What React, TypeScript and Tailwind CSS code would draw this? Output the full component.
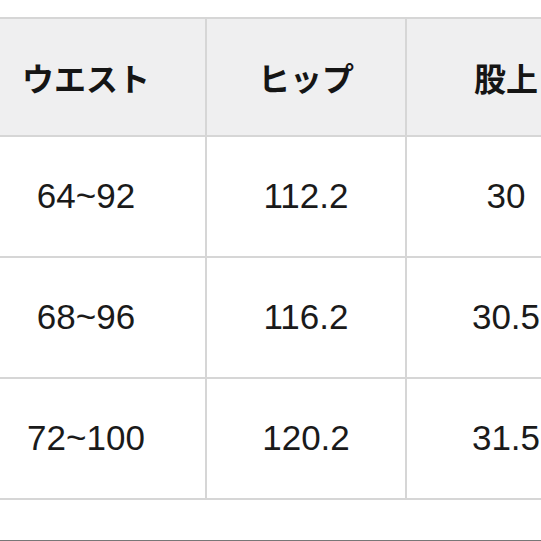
const headers = ['ウエスト', 'ヒップ', '股上'];
const rows = [
  ['64~92', '112.2', '30'],
  ['68~96', '116.2', '30.5'],
  ['72~100', '120.2', '31.5'],
];

export default function App() {
  return (
    <div className="h-[541px] w-[541px] overflow-hidden bg-white border-b border-[#777] pt-[17px]">
      <div
        className="ml-[-33px] grid grid-cols-[240px_200px_200px] border-t-2 border-[#d6d6d6] text-[#1c1c1c]"
        style={{ fontFamily: '"Liberation Sans", "Noto Sans CJK JP", sans-serif' }}
      >
        {headers.map((h) => (
          <div
            key={h}
            className="h-[118px] flex items-center justify-center bg-[#efeff0] border-r-2 border-b-2 border-[#d6d6d6] text-[32px] font-bold text-[#151515]"
            style={{ fontFamily: '"Noto Sans CJK JP", sans-serif' }}
          >
            {h}
          </div>
        ))}
        {rows.map((r, i) =>
          r.map((c, j) => (
            <div
              key={`${i}-${j}`}
              className="h-[121px] flex items-center justify-center border-r-2 border-b-2 border-[#d6d6d6] text-[35px] text-[#1a1a1a]"
            >
              {c}
            </div>
          ))
        )}
      </div>
    </div>
  );
}
